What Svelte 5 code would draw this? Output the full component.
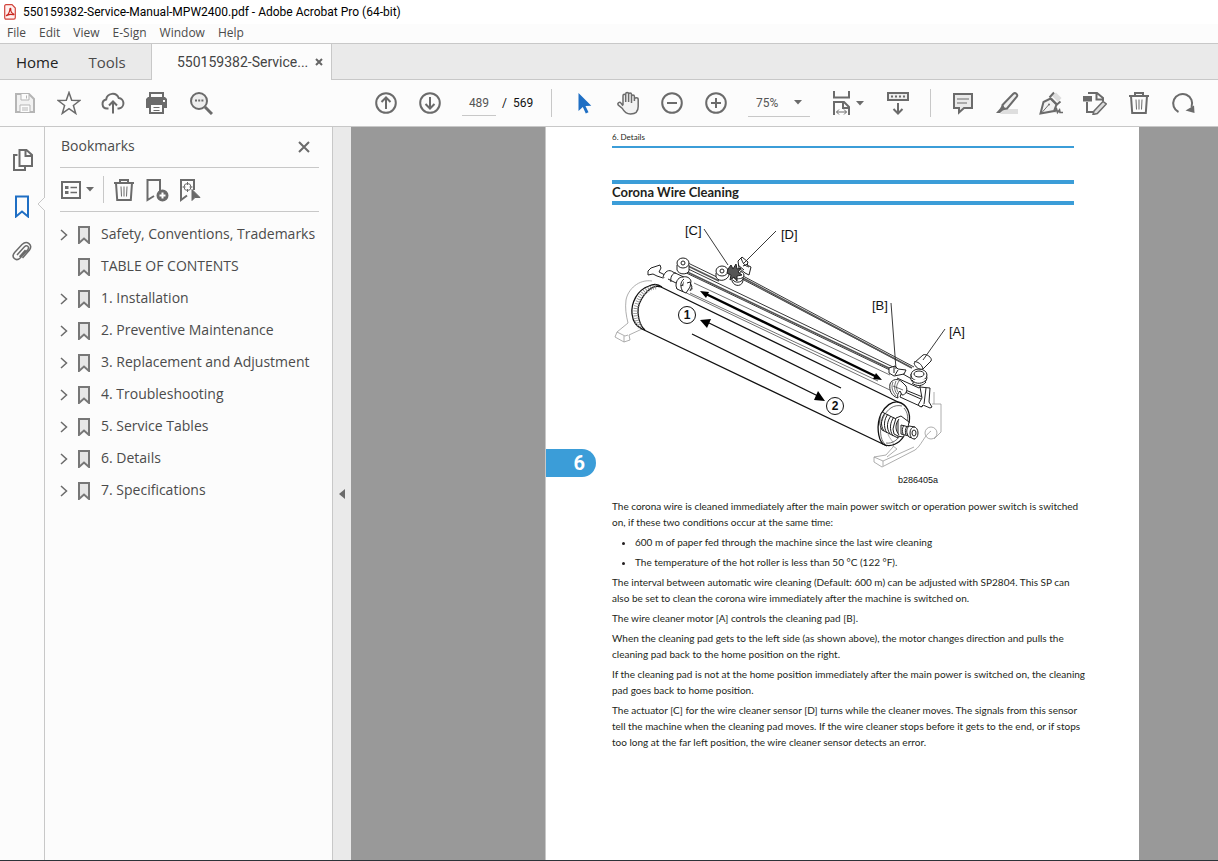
<script lang="ts">
  const menus = ['File', 'Edit', 'View', 'E-Sign', 'Window', 'Help'];
  const bookmarks = [
    { label: 'Safety, Conventions, Trademarks', children: true },
    { label: 'TABLE OF CONTENTS', children: false },
    { label: '1. Installation', children: true },
    { label: '2. Preventive Maintenance', children: true },
    { label: '3. Replacement and Adjustment', children: true },
    { label: '4. Troubleshooting', children: true },
    { label: '5. Service Tables', children: true },
    { label: '6. Details', children: true },
    { label: '7. Specifications', children: true },
  ];
  let page = $state('489');
  let zoom = $state('75%');
</script>

{#snippet trash()}
  <svg class="icon" viewBox="0 0 24 24"><path d="M2 5h20M8 4.500V2h8v2.500M4 5l1.200 17h13.600L20 5" /><path class="thin" d="M9 8.500l.5 10M12 8.500v10M15 8.500l-.5 10" /></svg>
{/snippet}

<div class="app">
  <header class="title">
    <svg class="logo" viewBox="0 0 12 16"><path d="M2 .7h6l3.300 3.300v9.500c0 1-.5 1.600-1.500 1.600H2C1.200 15.100.7 14.600.7 13.600V2C.7 1.200 1.200.7 2 .7z" fill="#fff0ef" stroke="#d1433b" stroke-width="1.200" /><path d="M2.600 11.300c1.500-.5 3.300-3.600 3.300-6.300 0-.8.900-.8.900 0-.2 2.200 1 4.200 2.800 5 .8.400.2.900-.5.700-2-.6-4.300-.2-5.600.7-.7.500-1.500.2-.9-.1z" fill="none" stroke="#c8241c" stroke-width="1.100" /></svg>
    <span>550159382-Service-Manual-MPW2400.pdf - Adobe Acrobat Pro (64-bit)</span>
  </header>

  <nav class="menu" aria-label="Menu">
    {#each menus as m}<button>{m}</button>{/each}
  </nav>

  <nav class="tabs" aria-label="Tabs">
    <div class="fixed-tabs"><button class="home">Home</button><button>Tools</button></div>
    <div class="doc-tab">
      <span>550159382-Service...</span>
      <button aria-label="Close tab"><svg viewBox="0 0 8 8"><path d="M1 1l6 6M7 1L1 7" /></svg></button>
    </div>
    <div class="tab-fill"></div>
  </nav>

  <div class="toolbar" role="toolbar" aria-label="Document tools">
    <div class="group files">
      <button class="tool off" aria-label="Save"><svg class="icon" viewBox="0 0 24 24"><path d="M3 3h13l5 5v13H3z" fill="#f2f2f2" /><path class="thin" d="M8 3v6h8V3M13.500 4.500v3M7 21v-7h10v7" fill="#fcfcfc" /><path class="thin" d="M9 17h6M9 19h6" /></svg></button>
      <button class="tool" aria-label="Star"><svg class="icon" viewBox="0 0 24 24"><path class="mid" d="M12 1.500l2.700 7.800 8.200.2-6.500 5 2.300 7.900L12 17.700l-6.700 4.700 2.300-7.900-6.500-5 8.200-.2z" /></svg></button>
      <button class="tool" aria-label="Upload"><svg class="icon" viewBox="0 0 24 24"><path d="M7.500 17.500H6a4.600 4.600 0 0 1-.8-9.100A6.500 6.500 0 0 1 17.700 7 5.300 5.300 0 0 1 18 17.500h-1.500M12 22.500V11M8 14.500l4-4 4 4" /></svg></button>
      <button class="tool" aria-label="Print"><svg class="icon" viewBox="0 0 24 24"><path d="M5 7V2h13v5" /><path d="M3 6h17l2 2v9H1V8z" fill="#6b6b6b" stroke="none" /><path d="M5 13h13v9H5z" fill="#fcfcfc" /><path class="thin" d="M8.500 16.500h6M8.500 19.500h6" /><path d="M18 10h2" stroke="#fcfcfc" /></svg></button>
      <button class="tool" aria-label="Find"><svg class="icon" viewBox="0 0 24 24"><circle cx="10" cy="10" r="8" fill="#eee" /><path d="M16 16l7 7" stroke-width="3" /><path d="M6 9.500h2M9.200 9.500h2M12.400 9.500h2" /></svg></button>
    </div>

    <div class="group paging">
      <button class="tool" aria-label="Previous page"><svg class="icon" viewBox="0 0 24 24"><circle cx="12" cy="12" r="9.800" /><path d="M12 18V7M7.500 11L12 6.500l4.500 4.500" /></svg></button>
      <button class="tool" aria-label="Next page"><svg class="icon" viewBox="0 0 24 24"><circle cx="12" cy="12" r="9.800" /><path d="M12 6v11M7.500 13l4.500 4.500 4.500-4.500" /></svg></button>
      <label class="page-box"><input aria-label="Page number" bind:value={page} /><span>/&nbsp; 569</span></label>
    </div>
    <i class="rule"></i>
    <div class="group">
      <button class="tool" aria-label="Select"><svg class="icon" viewBox="0 0 24 24"><path d="M6.500 2v18l4.300-4 3 6.500 2.700-1.200-3-6.300 5.800-.3z" fill="#1f6fc4" stroke="none" /></svg></button>
      <button class="tool" aria-label="Pan"><svg class="icon" viewBox="0 0 24 24"><path class="mid" d="M7 14V4.700c0-2 2.700-2 2.700 0V11 3c0-2 2.900-2 2.900 0v8V3.400c0-2 2.900-2 2.900 0V12 5.500c0-2 2.900-2 2.900 0V10 8.500c0-2.300 3.800-2.300 3.800 0v7c0 5-3.300 7.500-7.700 7.500-4.300 0-6.300-2-8.100-5.500L2.200 14c-1.200-2.300 1.600-3.500 2.800-1.900L7 14.800" fill="#f2f2f2" /></svg></button>
      <button class="tool" aria-label="Zoom out"><svg class="icon" viewBox="0 0 24 24"><circle cx="12" cy="12" r="9.800" /><path d="M7 12h10" /></svg></button>
      <button class="tool" aria-label="Zoom in"><svg class="icon" viewBox="0 0 24 24"><circle cx="12" cy="12" r="9.800" /><path d="M7 12h10M12 7v10" /></svg></button>
    </div>
    <label class="zoom"><select aria-label="Zoom" bind:value={zoom}><option>75%</option><option>100%</option></select><svg class="caret" viewBox="0 0 8 5"><path d="M0 0h8L4 4.500z" /></svg></label>
    <div class="group view">
      <button class="fit" aria-label="Fit page"><svg class="icon" viewBox="0 0 24 24"><path d="M4 0v6.500h15V0M4 24V11h10l5 5v8M13 11v6h6" /><path class="thin" d="M6.500 21h10M9 18.500L6.500 21 9 23.500M14 18.500l2.500 2.500-2.500 2.500" /></svg><svg class="caret" viewBox="0 0 8 5"><path d="M0 0h8L4 4.500z" /></svg></button>
      <button class="tool" aria-label="Scrolling"><svg class="icon" viewBox="0 0 24 24"><path d="M2 2h20v7H2z" fill="#eee" /><path d="M5 5.500h14" stroke-dasharray="2 2" /><path d="M12 12v10M7.500 18l4.500 4.500 4.500-4.500" /></svg></button>
    </div>
    <i class="rule"></i>
    <div class="group">
      <button class="tool" aria-label="Comment"><svg class="icon" viewBox="0 0 24 24"><path d="M3 3h18v14h-8l-5 4.500V17H3z" fill="#eaeaea" /><path class="thin" d="M6 8h12M6 12h10" /></svg></button>
      <button class="tool" aria-label="Highlight"><svg class="icon" viewBox="0 0 24 24"><path d="M9 18h14v5H5z" fill="#dedede" stroke="none" /><path d="M7.500 14L18.300 2.800c2-1.800 5 .7 3.500 2.900L12 17.500l-3.500.5z" fill="#eee" /><path class="solid" d="M7 14l4 4-3.500 1.700L5 22H1l4-4.500z" stroke="none" /></svg></button>
      <button class="tool" aria-label="Sign"><svg class="icon" viewBox="0 0 24 24"><path d="M13 5l4-3.500 5.500 5.500-3.500 4z" fill="#ddd" stroke="none" /><path d="M11.500 7.500l6 6L15 20 1.500 22.500 4.500 11z" fill="#f2f2f2" /><path d="M10.500 6.500l4.500-5M12 7.500l6 6 3.500-3" /><path class="thin" d="M2.500 22L9.500 14" /><circle class="solid" cx="10" cy="13.500" r="1" stroke="none" /><path d="M15.500 21l2-3 1 3.500 2-2.500.5 2.500h3" stroke-width="1.700" /></svg></button>
      <button class="tool" aria-label="Edit document"><svg class="icon" viewBox="0 0 24 24"><path d="M5 2h9l6 5v3M13.500 2v6.500H20M4 11v10h6" /><path d="M0 5h9v5.500H0z" fill="#6b6b6b" stroke="none" /><path class="mid" d="M11 20l9-9.500 3.300 2.500-9 9.500-4.300 1z" fill="#ddd" /></svg></button>
      <button class="tool" aria-label="Delete">{@render trash()}</button>
      <button class="tool" aria-label="Rotate"><svg class="icon" viewBox="0 0 24 24"><path d="M7.500 21A9.500 9.500 0 1 1 20.500 16" /><path class="solid" stroke="none" d="M14.500 19.500l8.500-5 .5 7.500z" /></svg></button>
    </div>
  </div>

  <div class="body">
    <aside class="rail">
      <button aria-label="Page thumbnails"><svg class="icon" viewBox="0 0 24 24"><path d="M7.500 7H4v15h11v-3.500" /><path d="M9.500 2h7l5.500 5v11H9.500zM15.500 2v6H22" /></svg></button>
      <button class="active" aria-label="Bookmarks"><svg class="icon" viewBox="0 0 24 24"><path d="M6 2.500h12v20L12 17.500l-6 5z" /></svg><svg class="notch" viewBox="0 0 8 14"><path d="M8 0L1 7l7 7" /></svg></button>
      <button aria-label="Attachments"><svg class="icon" viewBox="0 0 24 24"><path class="clip" d="M7 15l7.200-8c2.800-2.800 5.600 0 3.500 2.700l-7.300 8c-4.500 4.500-9.700-.5-5.800-5.200L12 4.500c5-4.800 11.200.4 7.300 5.800L12.500 18M9.500 16.800l6-6.800" /></svg></button>
    </aside>

    <section class="panel">
      <div class="panel-head"><h2>Bookmarks</h2><button aria-label="Close panel"><svg viewBox="0 0 12 12"><path d="M1 1l10 10M11 1L1 11" /></svg></button></div>
      <div class="panel-tools">
        <button class="options" aria-label="Options"><svg class="icon" viewBox="0 0 24 24"><path d="M3 4h18v16H3z" /><path d="M6 9.500h3.500M6 14.500h3.500" stroke-width="3" /><path d="M11.500 9.500H18M11.500 14.500H18" stroke-width="1.500" /></svg><svg class="caret" viewBox="0 0 8 5"><path d="M0 0h8L4 4.500z" /></svg></button>
        <i></i>
        <button aria-label="Delete bookmark">{@render trash()}</button>
        <button aria-label="New bookmark"><svg class="icon" viewBox="0 0 24 24"><path d="M9 18l-6.500 4V2H15v11" /><circle class="solid" cx="17.500" cy="17.500" r="5" /><path d="M14.500 17.500h6M17.500 14.500v6" stroke="#fff" /></svg></button>
        <button aria-label="Find current bookmark"><svg class="icon" viewBox="0 0 24 24"><path d="M16 12V2H3v20l6-4.500" /><circle class="thin" cx="9.500" cy="9" r="3.500" /><path class="thin" d="M9.500 4v3M9.500 11v3M4.500 9h3M11.500 9h3" /><path class="solid" d="M14 11.500v11l3-3h5z" stroke-width="1" /></svg></button>
      </div>
      <ul>
        {#each bookmarks as b}
          <li>
            <span class="chev">{#if b.children}<button aria-label={'Expand ' + b.label}><svg viewBox="0 0 8 12"><path d="M1 1l5.500 5L1 11" /></svg></button>{/if}</span>
            <svg class="mark" viewBox="0 0 12 18"><path d="M1 1h10v16l-5-4.500L1 17z" /></svg>
            <a href="#page">{b.label}</a>
          </li>
        {/each}
      </ul>
    </section>

    <button class="splitter" aria-label="Collapse panel"><svg viewBox="0 0 6 10"><path d="M6 0v10L0 5z" /></svg></button>

    <main class="viewer">
      <article class="page" id="page">
        <div class="running">6. Details</div>
        <h1>Corona Wire Cleaning</h1>
        <svg class="figure" viewBox="612 215 462 275" role="img" aria-label="Corona wire cleaning mechanism">
          <g class="pale">
            <path d="M652 281c-13-2-24 8-26 19-1 8 0 15 2 23l-11 9-2 5 9 5 6-2-1-5 13-6M617 332l8 4 3-1M624 336v6" />
            <path d="M888 434c2 6 7 8 5 13l-7 8-12 2v5l8 5 33-17c6-4 9-14 16-19M874 457l9 4 31-14M883 461v5M893 446l4 3-10 8M932 404h9v28l-7 7M934 392v12" />
            <ellipse cx="931" cy="433" rx="6" ry="6" />
          </g>
          <path class="line" d="M661 287L898 402M642 329L887 446" />
          <path class="fine" d="M664 276l28 14M694 283L890 375M676 288l216 103M660 274l33 15M690 293L878 381" />
          <path class="line" d="M661 287c-12-4-24 15-23 26 1 10 3 14 7 17M662 287c-4-3-9-3-13-1-12 4-18 17-17 28 1 9 5 12 10 15" />
          <path class="ridge" d="M656 287c-13 1-22 16-20 30 1 5 2 7 4 10" />
          <path class="line" d="M898 402c-6-1-13 4-17 12-5 11-3 25 2 30 7 4 16 0 21-8M898 402c9 2 13 11 11 21" />
          <path class="fine" d="M902 406c-8-2-15 3-19 12-4 10-3 22 2 26M904 408c4 5 4 9 3 14M886 443c6 1 11-3 14-7" />

          <g class="belt"><path d="M688 263l31 15M742 279L910 367M743 276L914 367" /><path d="M680 270L892 371M682 266L893 367" /><path class="mid-line" d="M743 278L912 368M681 269L893 370M688 266l31 15" /></g>
          <g class="part">
            <path d="M648 271l3-3 9-3 1 3 -2 4 8 4-4 2-6-2-4-2-5 1z" />
            <path d="M663 277c2-6 6-8 10-5l13 6-4 8-14-7M671 282c-1-4 1-9 5-9" />
            <path d="M676 286c0-6 3-9 7-9 4-1 7 1 8 4l-1 6-4 6-9-4zM684 279c-4 3-4 8-1 13M687 283l3-1 2 5-2 4" />
            <path d="M677 265v5c2 5 10 5 12 1v-6" /><ellipse cx="683" cy="263" rx="6" ry="5" /><circle cx="683" cy="263" r="2" />
            <path d="M716 273v4c3 6 12 3 13-2v-4" /><ellipse cx="722" cy="271" rx="6" ry="5" /><circle cx="722" cy="271" r="2" />
            <path d="M732 274v7c3 7 11 5 11-1v-6" /><ellipse cx="738" cy="275" rx="6" ry="4" /><path d="M733 280c2 3 8 3 10-1M735 271c2 4 5 3 6 0" />
            <path d="M738 261l4-4 6 5-1 3 4 2-2 8-4-2-6-5zM741 258c2 6 4 8 8 9M743 266l5-2M738 265l6 5" />
            <path class="gear" d="M728 269l3-4 2 4 3-5 1 5 4-1-3 4 4 3-5 1v5l-3-4-4 3 1-5-4-2z" />
            <path d="M889 368l6-2 3 3 8 1-2 4-10 2-5-3zM894 366v7M898 370l-3 5M897 378l22 10 3-5M903 374l14 8" />
            <path d="M903 389l22 9-3 9-22-10zM905 392l16 7" />
            <path d="M890 384c2-5 8-6 12-2l4 4c2 4 0 9-4 9l-2-4c-2 2-3 4-2 7-7-2-9-8-8-14z" /><path class="fine" d="M893 382c-2 5-1 9 3 14M896 381c-2 5-2 9 1 13M899 381c-3 5-3 7-1 11M893 386l10 4" />
            <path d="M911 374v6c4 7 15 5 16-2l-1-4" /><ellipse cx="919" cy="375" rx="8" ry="6" /><ellipse cx="919" cy="374" rx="5" ry="3" /><path d="M912 380c4 5 11 4 15-1M912 383c5 4 11 3 14-1" />
            <path d="M914 363l9-8c3-2 10 3 8 6l-8 8c-4 1-8-2-9-6z" /><path d="M914 362c3-1 8 2 9 7" />
            <path d="M920 387l10 1-1 14 3 5-2 1-7-3-2 2-3-2 4-7zM926 388l-2 16" />
            <path d="M882 412l16 8v18l-16-8c-3-6-3-12 0-18zM885 413c-4 5-5 12-1 18M888 414c-4 5-5 13-1 19M891 416c-4 5-5 12-1 18M894 417c-4 5-5 13-1 19" />
            <path d="M896 418l5-2 4 3 4 3-1 5 1 5-4 2-2 3-5-1-4-2-1-5 1-4zM899 419c-4 5-4 11 0 16" />
            <path d="M901 425l8 2v9l-8-2zM904 425c-2 3-2 6-1 9M907 426c-2 3-2 6-1 9" />
            <path d="M909 426l6 1v12l-6-2c-3-4-3-8 0-11z" /><ellipse cx="914" cy="433" rx="4" ry="6" /><ellipse cx="914" cy="433" rx="2" ry="3" />
          </g>
          <path class="pointer" d="M704 229l24 36M776 231l-33 33M891 303l5 66M945 329l-22 31" />
          <path d="M706 294L877 377" stroke="#000" stroke-width="2.400" />
          <path d="M700 291l9 1-3 6zM882 380l-9-1 3-6z" fill="#000" />
          <path d="M707 322L841 388M692 334L820 397" class="line" />
          <path d="M700 320l11-1-4 9zM825 401l-11-1 4-9z" fill="#000" />
          <g class="number"><circle cx="687" cy="315" r="8.500" /><circle cx="835" cy="406" r="8.500" /></g>
          <g class="bold"><text x="687" y="319">1</text><text x="835" y="410">2</text></g>
          <g class="labels"><text x="685" y="235">[C]</text><text x="781" y="239">[D]</text><text x="872" y="310">[B]</text><text x="949" y="336">[A]</text></g>
          <text class="code" x="898" y="483">b286405a</text>
        </svg>
        <div class="copy">
          <p>The corona wire is cleaned immediately after the main power switch or operation power switch is switched<br />on, if these two conditions occur at the same time:</p>
          <ul>
            <li>600 m of paper fed through the machine since the last wire cleaning</li>
            <li>The temperature of the hot roller is less than 50 °C (122 °F).</li>
          </ul>
          <p>The interval between automatic wire cleaning (Default: 600 m) can be adjusted with SP2804. This SP can<br />also be set to clean the corona wire immediately after the machine is switched on.</p>
          <p>The wire cleaner motor [A] controls the cleaning pad [B].</p>
          <p>When the cleaning pad gets to the left side (as shown above), the motor changes direction and pulls the<br />cleaning pad back to the home position on the right.</p>
          <p>If the cleaning pad is not at the home position immediately after the main power is switched on, the cleaning<br />pad goes back to home position.</p>
          <p>The actuator [C] for the wire cleaner sensor [D] turns while the cleaner moves. The signals from this sensor<br />tell the machine when the cleaning pad moves. If the wire cleaner stops before it gets to the end, or if stops<br />too long at the far left position, the wire cleaner sensor detects an error.</p>
        </div>
        <span class="chapter">6</span>
      </article>
    </main>
  </div>
</div>

<style>
  :global(body) { margin: 0; background: #fcfcfc; }
  .app { min-height: 100vh; box-sizing: border-box; display: flex; flex-direction: column; font-family: "Open Sans", "Noto Sans", sans-serif; color: #4b4b4b; background: #fcfcfc; border-bottom: 1px solid #2c3439; overflow: hidden; }
  button { border: 0; background: none; padding: 0; font: inherit; color: inherit; display: flex; align-items: center; justify-content: center; }
  svg { display: block; flex: none; }
  .title { height: 24px; display: flex; align-items: center; gap: 7px; padding-left: 4px; background: #fff; color: #000; font-family: Roboto, sans-serif; font-size: 12px; white-space: nowrap; }
  .logo { width: 12px; height: 16px; }
  .menu { height: 19px; display: flex; align-items: center; gap: 13px; padding-left: 7px; font-size: 12px; line-height: 18px; border-bottom: 1px solid #c8c8c8; }
  .menu button { padding-bottom: 2px; }
  .tabs { height: 36px; display: flex; font-size: 15px; }
  .fixed-tabs { display: flex; gap: 30px; width: 135px; padding-left: 16px; background: #eaeaea; border-right: 1px solid #c8c8c8; border-bottom: 1px solid #c8c8c8; }
  .home { color: #222; }
  .doc-tab { display: flex; align-items: center; justify-content: space-between; width: 146px; padding: 0 8px 0 25px; font-family: Roboto, sans-serif; font-size: 14px; color: #444; }
  .doc-tab svg { width: 8px; height: 8px; stroke: #666; stroke-width: 2; }
  .tab-fill { flex: 1; background: #eaeaea; border-left: 1px solid #c8c8c8; border-bottom: 1px solid #c8c8c8; }
  .toolbar { height: 46px; display: flex; align-items: center; border-bottom: 1px solid #c8c8c8; }
  .group { display: flex; align-items: center; }
  .files { margin: 0 141px 0 3px; }
  .tool { width: 44px; height: 40px; }
  .icon { width: 24px; height: 24px; fill: none; stroke: #6b6b6b; stroke-width: 2; }
  .off .icon { stroke: #b5b5b5; }
  .icon .thin { stroke-width: 1; }
  .icon .mid, .icon .clip { stroke-width: 1.500; }
  .icon .solid { fill: #6b6b6b; }
  .caret { width: 8px; height: 5px; fill: #6b6b6b; }
  .page-box { display: flex; align-items: center; gap: 6px; margin-left: 10px; font-family: Roboto, sans-serif; font-size: 12px; color: #111; white-space: nowrap; }
  .page-box span { width: 38px; }
  input { width: 34px; height: 26px; box-sizing: border-box; border: 0; border-bottom: 1px solid #c8c8c8; background: none; padding: 0; text-align: center; font: inherit; color: #555; }
  .rule { width: 1px; height: 28px; background: #c8c8c8; margin: 0 10px 0 11px; }
  .zoom { display: flex; align-items: center; width: 54px; height: 26px; margin-left: 10px; padding-right: 8px; border-bottom: 1px solid #c8c8c8; }
  select { appearance: none; border: 0; background: none; flex: 1; min-width: 0; padding: 0 0 0 8px; font-family: Roboto, sans-serif; font-size: 12px; color: #555; }
  .view { margin-left: 20px; gap: 12px; }
  .fit { height: 40px; gap: 2px; }
  .rule + .group { margin: 0; }
  .view + .rule { margin-left: 10px; margin-right: 10px; }

  .body { flex: 1; display: flex; }
  .rail { width: 44px; border-right: 1px solid #c8c8c8; padding-top: 10px; }
  .rail button { width: 44px; height: 46px; position: relative; }
  .rail .active .icon { stroke: #1f6fc4; }
  .notch { position: absolute; width: 8px; height: 14px; right: -1px; top: 14px; fill: #fcfcfc; stroke: #c8c8c8; }
  .panel { width: 259px; padding: 0 13px 0 15px; border-right: 1px solid #c8c8c8; }
  .panel-head { height: 40px; display: flex; align-items: center; justify-content: space-between; border-bottom: 1px solid #c8c8c8; padding: 0 9px 0 1px; }
  h2 { margin: 0; font-size: 14px; line-height: 18px; padding-bottom: 2px; font-weight: 400; }
  .panel-head svg { width: 12px; height: 12px; stroke: #6b6b6b; stroke-width: 2; }
  .panel-tools { height: 43px; display: flex; align-items: center; gap: 9px; border-bottom: 1px solid #c8c8c8; }
  .options { gap: 3px; margin-left: -1px; }
  .panel-tools i { width: 1px; height: 27px; background: #c8c8c8; }
  .panel-tools i + button { margin-left: -1px; }
  .panel ul { list-style: none; margin: 7px 0 0; padding: 0; }
  .panel li { height: 32px; display: flex; align-items: center; white-space: nowrap; font-size: 14px; line-height: 18px; }
  .chev { width: 18px; }
  .chev svg { width: 8px; height: 12px; fill: none; stroke: #6b6b6b; stroke-width: 1.500; }
  .mark { width: 12px; height: 18px; fill: #e6e6e6; stroke: #777; stroke-width: 2; margin-right: 11px; }
  a { color: inherit; text-decoration: none; padding-bottom: 2px; }
  .splitter { width: 18px; background: #eaeaea; }
  .splitter svg { width: 6px; height: 10px; fill: #6b6b6b; }

  .viewer { flex: 1; min-width: 0; background: #999; display: grid; grid-template-columns: 194fr 594px 79fr; }
  .page { grid-column: 2; position: relative; box-sizing: border-box; background: #fff; border-left: 1px solid #c8c8c8; padding: 0 65px 0 66px; color: #231f20; font-family: Lato, "Open Sans", sans-serif; }
  .running { height: 19px; line-height: 20px; font-size: 8px; border-bottom: 2px solid #3b9dd8; }
  h1 { margin: 32px 0 10px; border: solid #3b9dd8; border-width: 4px 0; font-size: 13px; line-height: 17px; font-weight: 700; }
  .figure { width: 100%; height: auto; fill: none; }
  .figure .pale { stroke: #999; stroke-width: 0.800; }
  .figure .line { stroke: #111; stroke-width: 1.300; }
  .figure .fine { stroke: #333; stroke-width: 0.700; }
  .figure .ridge { stroke: #888; stroke-width: 5; stroke-dasharray: 0.800 1.600; }
  .figure .gear { fill: #555; }
  .belt { stroke: #222; stroke-width: 0.900; }
  .belt .mid-line { stroke: #555; stroke-width: 1.600; }
  .part { stroke: #222; stroke-width: 1; fill: #fff; stroke-linejoin: round; }
  .pointer { stroke: #222; stroke-width: 0.900; }
  .number { stroke: #111; fill: #fff; }
  text { font-family: "Liberation Sans", Arial, sans-serif; fill: #111; stroke: none; }
  .labels { font-size: 13px; }
  .bold { font-size: 12px; font-weight: 700; text-anchor: middle; }
  .code { font-size: 9px; }
  .copy { padding-top: 8px; font-size: 10px; line-height: 16px; white-space: nowrap; }
  .copy p { margin: 0 0 4px; }
  .copy ul { margin: 0; padding-left: 23px; }
  .copy li { margin-bottom: 4px; }
  .chapter { position: absolute; left: 0; top: 322px; width: 50px; height: 28px; box-sizing: border-box; padding-right: 11px; border-radius: 0 14px 14px 0; background: #3b9dd8; color: #fff; text-align: right; font-family: Roboto, sans-serif; font-size: 20px; line-height: 28px; font-weight: 700; }
</style>
